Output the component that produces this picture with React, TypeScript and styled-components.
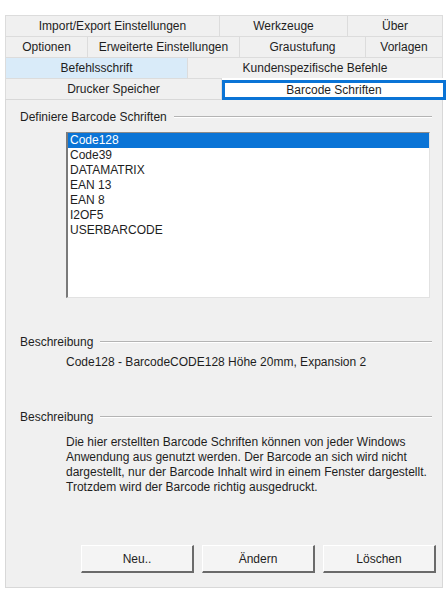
import React from "react";
import styled, { createGlobalStyle } from "styled-components";

const Global = createGlobalStyle`
  html, body { margin: 0; padding: 0; background: #ffffff; }
  body { font-family: "Liberation Sans", Arial, sans-serif; font-size: 12px; color: #1e1e1e; }
`;

const Frame = styled.div`
  width: 438px;
  padding: 15px 0 0 5px;
`;

const TabRow = styled.div`
  display: flex;
  height: 21px;
`;

const Tab = styled.div<{ $w: number; $hover?: boolean }>`
  box-sizing: border-box;
  width: ${(p) => p.$w}px;
  height: 21px;
  display: flex;
  align-items: center;
  justify-content: center;
  white-space: nowrap;
  background: ${(p) => (p.$hover ? "#d9ebf9" : "#f0f0f0")};
  border-top: 1px solid #dcdcdc;
  border-right: 1px solid #dcdcdc;
  &:first-child { border-left: 1px solid #dcdcdc; }
  color: #1e1e1e;
`;

const SelectedTab = styled.div<{ $w: number }>`
  box-sizing: border-box;
  width: ${(p) => p.$w}px;
  height: 20px;
  margin-top: 2px;
  margin-right: -3px;
  display: flex;
  align-items: center;
  justify-content: center;
  background: #ffffff;
  border: 3px solid #0a74d6;
  position: relative;
  z-index: 1;
`;

const Panel = styled.div`
  box-sizing: border-box;
  width: 438px;
  height: 489px;
  background: #f0f0f0;
  border: 1px solid #d8d8d8;
  display: flex;
  flex-direction: column;
`;

const GroupHeader = styled.div<{ $mt: number }>`
  display: flex;
  align-items: center;
  height: 14px;
  margin-top: ${(p) => p.$mt}px;
  padding: 0 10px 0 14px;
  white-space: nowrap;
  &::after {
    content: "";
    flex: 1;
    margin-left: 7px;
    height: 0;
    border-top: 1px solid #b4b4b4;
    border-bottom: 1px solid #ffffff;
  }
`;

const ListBox = styled.div`
  box-sizing: border-box;
  margin: 8px 0 0 60px;
  width: 364px;
  height: 166px;
  background: #ffffff;
  border-top: 1px solid #8a8a8a;
  border-left: 2px solid #7a7a7a;
  border-right: 1px solid #e2e2e2;
  border-bottom: 1px solid #e2e2e2;
`;

const ListItem = styled.div<{ $sel?: boolean }>`
  height: 15px;
  line-height: 15px;
  padding-left: 2px;
  background: ${(p) => (p.$sel ? "#0a74d6" : "transparent")};
  color: ${(p) => (p.$sel ? "#ffffff" : "#1e1e1e")};
  white-space: nowrap;
`;

const DescText = styled.div`
  margin: 6px 0 0 60px;
  line-height: 14px;
  white-space: nowrap;
`;

const Paragraph = styled.div`
  margin: 11px 0 0 60px;
  line-height: 15px;
  white-space: nowrap;
`;

const ButtonRow = styled.div`
  display: flex;
  gap: 8px;
  margin: 50px 0 0 75px;
`;

const Button = styled.button`
  box-sizing: border-box;
  width: 113px;
  height: 28px;
  font-family: "Liberation Sans", Arial, sans-serif;
  font-size: 12px;
  color: #1e1e1e;
  background: #f4f4f4;
  border-top: 1px solid #ffffff;
  border-left: 1px solid #ffffff;
  border-right: 2px solid #6a6a6a;
  border-bottom: 2px solid #6a6a6a;
  padding: 0;
`;

const items = ["Code128", "Code39", "DATAMATRIX", "EAN 13", "EAN 8", "I2OF5", "USERBARCODE"];

export default function App() {
  return (
    <>
      <Global />
      <Frame>
        <TabRow>
          <Tab $w={215}>Import/Export Einstellungen</Tab>
          <Tab $w={128}>Werkzeuge</Tab>
          <Tab $w={95}>Über</Tab>
        </TabRow>
        <TabRow>
          <Tab $w={83}>Optionen</Tab>
          <Tab $w={152}>Erweiterte Einstellungen</Tab>
          <Tab $w={126}>Graustufung</Tab>
          <Tab $w={77}>Vorlagen</Tab>
        </TabRow>
        <TabRow>
          <Tab $w={183} $hover>Befehlsschrift</Tab>
          <Tab $w={255}>Kundenspezifische Befehle</Tab>
        </TabRow>
        <TabRow>
          <Tab $w={217}>Drucker Speicher</Tab>
          <SelectedTab $w={224}>Barcode Schriften</SelectedTab>
        </TabRow>
        <Panel>
          <GroupHeader $mt={10}>Definiere Barcode Schriften</GroupHeader>
          <ListBox>
            {items.map((it, i) => (
              <ListItem key={it} $sel={i === 0}>{it}</ListItem>
            ))}
          </ListBox>
          <GroupHeader $mt={37}>Beschreibung</GroupHeader>
          <DescText>Code128 - BarcodeCODE128 Höhe 20mm, Expansion 2</DescText>
          <GroupHeader $mt={41}>Beschreibung</GroupHeader>
          <Paragraph>
            Die hier erstellten Barcode Schriften können von jeder Windows
            <br />
            Anwendung aus genutzt werden. Der Barcode an sich wird nicht
            <br />
            dargestellt, nur der Barcode Inhalt wird in einem Fenster dargestellt.
            <br />
            Trotzdem wird der Barcode richtig ausgedruckt.
          </Paragraph>
          <ButtonRow>
            <Button>Neu..</Button>
            <Button>Ändern</Button>
            <Button>Löschen</Button>
          </ButtonRow>
        </Panel>
      </Frame>
    </>
  );
}
